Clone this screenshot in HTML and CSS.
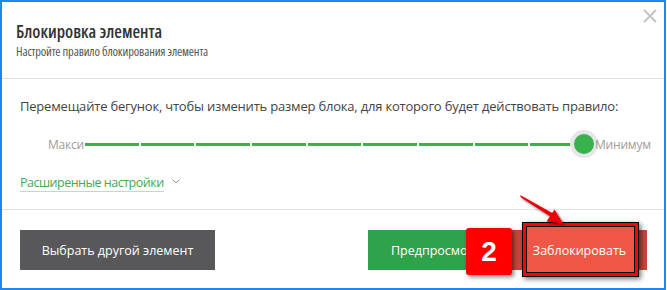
FILE: index.html
```html
<!DOCTYPE html>
<html lang="ru">

<head>
    <meta charset="UTF-8">
    <title>Блокировка элемента</title>
    <link rel="stylesheet" href="styles.css">
</head>

<body>
    <div class="frame">
        <header class="head">
            <h1>Блокировка элемента</h1>
            <p>Настройте правило блокирования элемента</p>
            <svg class="close" width="14" height="14" viewBox="0 0 14 14">
                <path d="M1 1 L13 13 M13 1 L1 13" stroke="#c6c6c6" stroke-width="2.2" />
            </svg>
        </header>

        <main class="content">
            <p class="hint">Перемещайте бегунок, чтобы изменить размер блока, для которого будет действовать правило:</p>
            <div class="slider">
                <span class="edge">Макси</span>
                <div class="track">
                    <span></span><span></span><span></span><span></span><span></span>
                    <span></span><span></span><span></span><span></span>
                </div>
                <span class="knob"></span>
                <span class="edge edge-right">Минимум</span>
            </div>
            <a class="more">Расширенные настройки</a>
            <svg class="chev" width="8" height="5" viewBox="0 0 8 5">
                <path d="M0.5 0.5 L4 4 L7.5 0.5" fill="none" stroke="#9a9a9a" stroke-width="1" />
            </svg>
        </main>

        <footer class="foot">
            <button class="btn btn-gray">Выбрать другой элемент</button>
            <div class="actions">
                <button class="btn btn-green">Предпросмотр</button>
                <button class="btn btn-red"><span class="mark"></span><span class="label">Заблокировать</span></button>
                <div class="badge">2</div>
            </div>
        </footer>

        <svg class="arrow" width="60" height="45" viewBox="0 0 60 45">
            <defs>
                <filter id="sh" x="-30%" y="-30%" width="160%" height="160%">
                    <feDropShadow dx="1.5" dy="1.5" stdDeviation="1.2" flood-color="#000" flood-opacity="0.6" />
                </filter>
            </defs>
            <g filter="url(#sh)">
                <polygon points="8,8 9,10.5 39,30 41,26.5" fill="#e8000b" />
                <polygon points="51,36.5 34.5,34.5 42.5,22.5" fill="#e8000b" />
            </g>
        </svg>
    </div>
</body>

</html>
```

FILE: styles.css
```css
/* General */
body {
    margin: 0;
    font-family: 'Open Sans', 'Liberation Sans', sans-serif;
    background-color: #FFFFFF;
}

.frame {
    position: relative;
    width: 666px;
    height: 290px;
    box-sizing: border-box;
    border: 2px solid #1a87f2;
    background-color: #FFFFFF;
    display: flex;
    flex-direction: column;
}

/* Header */
.head {
    position: relative;
    padding: 18px 14px 17px 14px;
    border-bottom: 1px solid #e2e2e2;
}

.head h1 {
    margin: 0;
    font-size: 17.5px;
    line-height: 22px;
    font-weight: 600;
    font-stretch: 75%;
    color: #333333;
}

.head p {
    margin: 1px 0 0;
    font-size: 12.5px;
    line-height: 18px;
    font-stretch: 75%;
    letter-spacing: -0.15px;
    color: #555555;
}

.close {
    position: absolute;
    top: 7px;
    right: 7px;
}

/* Body */
.content {
    padding: 17px 18px 17px 18px;
    border-bottom: 1px solid #e2e2e2;
}

.hint {
    margin: 0;
    font-size: 13px;
    line-height: 20px;
    letter-spacing: -0.2px;
    color: #444444;
    white-space: nowrap;
}

.slider {
    display: flex;
    align-items: center;
    height: 28px;
    margin: 14px 0 12px 28px;
}

.edge {
    flex: none;
    font-size: 12px;
    letter-spacing: -0.2px;
    color: #9c9c9c;
    width: 37px;
}

.edge-right {
    width: auto;
    margin-left: -3px;
}

.track {
    flex: none;
    display: flex;
    gap: 2px;
    width: 499px;
}

.track span {
    flex: 1;
    height: 3px;
    background-color: #37b24d;
}

.knob {
    flex: none;
    width: 20px;
    height: 20px;
    margin-left: -14px;
    border-radius: 50%;
    background-color: #37b24d;
    border: 4px solid #e6e6e6;
}

.more {
    font-size: 12.5px;
    line-height: 18px;
    letter-spacing: -0.5px;
    color: #45a852;
    border-bottom: 1px solid #b9dfbf;
}

.chev {
    margin-left: 4px;
    vertical-align: 3px;
}

/* Footer */
.foot {
    display: flex;
    justify-content: space-between;
    align-items: flex-start;
    padding: 20px 17px 0 18px;
}

.actions {
    position: relative;
    display: flex;
    gap: 8px;
}

.btn {
    height: 40px;
    border: none;
    font-family: 'Open Sans', 'Liberation Sans', sans-serif;
    font-size: 12.5px;
    font-weight: 500;
    color: #FFFFFF;
    padding: 0 8px;
    white-space: nowrap;
}

.btn-gray {
    width: 195px;
    background-color: #58585a;
}

.btn-green {
    width: 136px;
    background-color: #2fa34b;
}

.btn-red {
    position: relative;
    width: 135px;
    background-color: #c8473b;
}

.btn-red .label {
    position: relative;
}

/* Screenshot annotation */
.mark {
    position: absolute;
    left: 10px;
    right: 8px;
    top: -8px;
    bottom: -7px;
    background-color: #ef5646;
    border: 1px solid #000000;
    box-shadow: inset 0 0 0 3px #ff0000, inset 0 0 0 4px #000000, 2px 2px 5px rgba(0, 0, 0, 0.55);
}

.badge {
    position: absolute;
    left: 98px;
    top: -2px;
    width: 46px;
    height: 47px;
    border-radius: 3px;
    background-color: #ff0000;
    color: #FFFFFF;
    font-family: 'Liberation Sans', sans-serif;
    font-weight: bold;
    font-size: 28px;
    display: flex;
    align-items: center;
    justify-content: center;
    box-shadow: 2px 2px 4px rgba(0, 0, 0, 0.5);
}

.arrow {
    position: absolute;
    left: 510px;
    top: 185px;
}
```
